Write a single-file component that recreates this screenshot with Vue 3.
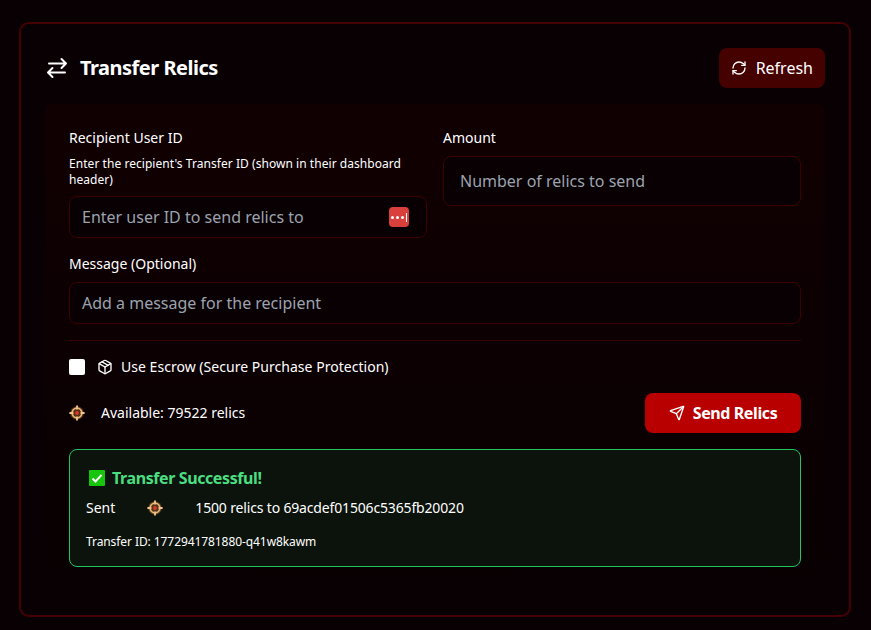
<template>
  <div class="page">
    <div class="card">
      <div class="head">
        <h2 class="title">
          <svg class="swap" width="24" height="24" viewBox="0 0 24 24" fill="none" stroke="#fff" stroke-width="2" stroke-linecap="round" stroke-linejoin="round">
            <path d="M21 7.5H4M16.5 3l4.5 4.5-4.5 4.5" />
            <path d="M3 16.500h17M7.500 12 3 16.500 7.500 21" />
          </svg>
          Transfer Relics
        </h2>
        <button class="refresh">
          <svg width="16" height="16" viewBox="0 0 24 24" fill="none" stroke="#fff" stroke-width="2" stroke-linecap="round" stroke-linejoin="round">
            <path d="M3 12a9 9 0 0 1 9-9 9.750 9.750 0 0 1 6.740 2.740L21 8" />
            <path d="M21 3v5h-5" />
            <path d="M21 12a9 9 0 0 1-9 9 9.750 9.750 0 0 1-6.740-2.740L3 16" />
            <path d="M8 16H3v5" />
          </svg>
          Refresh
        </button>
      </div>

      <div class="panel">
        <div class="cols">
          <div class="field">
            <label class="label">Recipient User ID</label>
            <p class="hint">Enter the recipient's Transfer ID (shown in their dashboard header)</p>
            <div class="input-wrap">
              <input class="input" placeholder="Enter user ID to send relics to" />
              <span class="lastpass"><i></i><i></i><i></i><b></b></span>
            </div>
          </div>
          <div class="field">
            <label class="label">Amount</label>
            <input class="input" placeholder="Number of relics to send" />
          </div>
        </div>

        <div class="field msg">
          <label class="label">Message (Optional)</label>
          <input class="input" placeholder="Add a message for the recipient" />
        </div>

        <div class="escrow">
          <span class="check"></span>
          <svg width="16" height="16" viewBox="0 0 24 24" fill="none" stroke="#fff" stroke-width="2" stroke-linecap="round" stroke-linejoin="round">
            <path d="M11 21.730a2 2 0 0 0 2 0l7-4A2 2 0 0 0 21 16V8a2 2 0 0 0-1-1.730l-7-4a2 2 0 0 0-2 0l-7 4A2 2 0 0 0 3 8v8a2 2 0 0 0 1 1.730z" />
            <path d="M12 22V12" />
            <path d="M3.290 7 12 12l8.710-5" />
            <path d="m7.500 4.270 9 5.150" />
          </svg>
          <span class="lift">Use Escrow (Secure Purchase Protection)</span>
        </div>

        <div class="send-row">
          <div class="avail">
            <svg class="relic" width="16" height="16" viewBox="0 0 16 16" fill="none">
              <circle cx="8" cy="8" r="6.800" fill="#8a5a2a" fill-opacity=".55" />
              <circle cx="8" cy="8" r="4.800" stroke="#eab676" stroke-width="1.800" />
              <path d="M8 .4v4M8 11.600v4M.4 8h4M11.600 8h4" stroke="#f0c48c" stroke-width="1.800" />
              <circle cx="8" cy="8" r="1.900" fill="#e0352b" />
            </svg>
            <span class="lift">Available: {{ available }} relics</span>
          </div>
          <button class="send">
            <svg width="16" height="16" viewBox="0 0 24 24" fill="none" stroke="#fff" stroke-width="2" stroke-linecap="round" stroke-linejoin="round">
              <path d="M14.536 21.686a.5.5 0 0 0 .937-.024l6.500-19a.496.496 0 0 0-.635-.635l-19 6.500a.5.5 0 0 0-.024.937l7.930 3.180a2 2 0 0 1 1.112 1.110z" />
              <path d="m21.854 2.147-10.940 10.939" />
            </svg>
            Send Relics
          </button>
        </div>

        <div class="success">
          <div class="success-title">
            <svg class="tick" width="16" height="16" viewBox="0 0 16 16">
              <rect width="16" height="16" rx="1" fill="#16c60c" />
              <path d="M3.500 8.500 6.500 11.500 12.500 4.800" fill="none" stroke="#fff" stroke-width="2" />
            </svg>
            Transfer Successful!
          </div>
          <div class="sent">
            <span>Sent</span>
            <svg class="relic" width="16" height="16" viewBox="0 0 16 16" fill="none">
              <circle cx="8" cy="8" r="6.800" fill="#8a5a2a" fill-opacity=".55" />
              <circle cx="8" cy="8" r="4.800" stroke="#eab676" stroke-width="1.800" />
              <path d="M8 .4v4M8 11.600v4M.4 8h4M11.600 8h4" stroke="#f0c48c" stroke-width="1.800" />
              <circle cx="8" cy="8" r="1.900" fill="#e0352b" />
            </svg>
            <span class="sent-text">1500 relics to 69acdef01506c5365fb20020</span>
          </div>
          <div class="tid">Transfer ID: 1772941781880-q41w8kawm</div>
        </div>
      </div>
    </div>
  </div>
</template>

<script setup>
const available = 79522
</script>

<style>
html,
body {
  margin: 0;
  background: #080002;
}
</style>

<style scoped>
.page {
  width: 871px;
  height: 630px;
  padding: 22px 20px 13px 19px;
  box-sizing: border-box;
  background: #080002;
  font-family: "Noto Sans", "Open Sans", sans-serif;
  color: #fff;
  overflow: hidden;
}

.card {
  height: 595px;
  box-sizing: border-box;
  border: 2px solid #450005;
  border-radius: 10px;
  padding: 24px 24px 0;
}

.head {
  display: flex;
  align-items: center;
  justify-content: space-between;
  height: 40px;
}

.title {
  display: flex;
  align-items: center;
  gap: 11px;
  margin: 0;
  font-size: 20px;
  font-weight: 700;
  line-height: 28px;
  letter-spacing: -0.5px;
}

.refresh {
  display: flex;
  align-items: center;
  gap: 9px;
  height: 40px;
  padding: 0 12px;
  border: 0;
  border-radius: 8px;
  background: #450000;
  color: #fff;
  font: 400 16px "Noto Sans", sans-serif;
}

.panel {
  margin-top: 16px;
  height: 488px;
  box-sizing: border-box;
  padding: 24px;
  border-radius: 8px;
  background: linear-gradient(180deg, #110002 0%, #0b0002 60%, #080002 100%);
}

.cols {
  display: grid;
  grid-template-columns: 1fr 1fr;
  gap: 16px;
}

.field {
  display: flex;
  flex-direction: column;
}

.label {
  font-size: 14px;
  line-height: 20px;
  margin-bottom: 8px;
}

.hint {
  margin: 0 0 8px;
  font-size: 12px;
  line-height: 16px;
  letter-spacing: 0.05px;
}

.input-wrap {
  position: relative;
}

.input {
  display: block;
  width: 100%;
  box-sizing: border-box;
  height: 42px;
  padding: 0 12px;
  border: 1px solid #3d0000;
  border-radius: 8px;
  background: #080002;
  color: #fff;
  font: 16px "Noto Sans", sans-serif;
}

.input::placeholder {
  color: #9ca3af;
  opacity: 1;
}

.cols > .field:last-child .input {
  height: 50px;
  padding: 0 16px;
}

.lastpass {
  position: absolute;
  right: 18px;
  top: 11px;
  width: 20px;
  height: 20px;
  display: flex;
  align-items: center;
  gap: 2px;
  padding-left: 2px;
  box-sizing: border-box;
  border-radius: 4px;
  background: #d9403c;
}

.lastpass i {
  width: 3px;
  height: 3px;
  border-radius: 50%;
  background: #fff;
}

.lastpass b {
  width: 1px;
  height: 9px;
  background: #fff;
}

.msg {
  margin-top: 16px;
  padding-bottom: 16px;
  border-bottom: 1px solid #3d0000;
}

.escrow {
  display: flex;
  align-items: center;
  height: 20px;
  margin-top: 16px;
  font-size: 14px;
  gap: 8px;
}

.check {
  width: 16px;
  height: 16px;
  margin-right: 4px;
  border-radius: 2px;
  background: #fff;
}

.lift {
  margin-bottom: 2px;
}

.escrow .lift {
  letter-spacing: 0.03px;
}

.send-row {
  display: flex;
  align-items: center;
  justify-content: space-between;
  margin-top: 16px;
}

.avail {
  display: flex;
  align-items: center;
  gap: 16px;
  font-size: 14px;
}

.send {
  display: flex;
  align-items: center;
  justify-content: center;
  gap: 8px;
  width: 156px;
  height: 40px;
  border: 0;
  border-radius: 8px;
  background: #b80000;
  color: #fff;
  font: 700 16px "Noto Sans", sans-serif;
  letter-spacing: -0.4px;
}

.success {
  margin-top: 16px;
  height: 118px;
  box-sizing: border-box;
  padding: 16px;
  border: 1px solid #22c55e;
  border-radius: 8px;
  background: #0c130c;
}

.success-title {
  display: flex;
  align-items: center;
  gap: 7px;
  padding-left: 3px;
  color: #4ade80;
  font-size: 16px;
  font-weight: 700;
  line-height: 24px;
  letter-spacing: -0.4px;
}

.sent {
  display: flex;
  align-items: center;
  gap: 32px;
  margin-top: 8px;
  font-size: 14px;
  line-height: 20px;
}

.sent-text {
  letter-spacing: -0.16px;
}

.tid {
  margin-top: 16px;
  font-size: 12px;
  line-height: 16px;
  letter-spacing: -0.08px;
}
</style>
